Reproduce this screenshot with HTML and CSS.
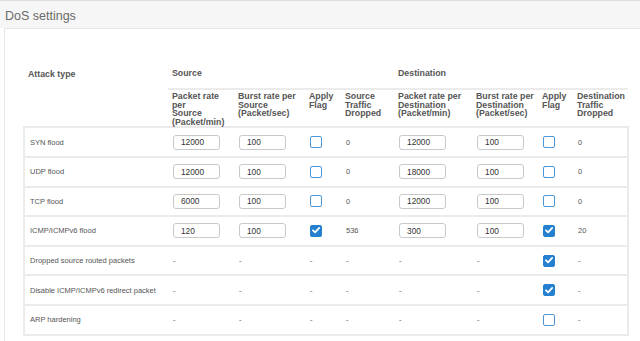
FILE: index.html
```html
<!DOCTYPE html>
<html lang="en">
  <head>
    <meta charset="UTF-8" />
    <title>DoS settings</title>
    <link rel="stylesheet" href="styles.css">
  </head>
  <body>
    <div class="section-title">DoS settings</div>

    <div class="panel">
      <table class="dos-table">
        <colgroup>
          <col style="width: 144px">
          <col style="width: 66px">
          <col style="width: 71px">
          <col style="width: 36px">
          <col style="width: 53px">
          <col style="width: 78px">
          <col style="width: 66px">
          <col style="width: 35px">
          <col style="width: 55px">
        </colgroup>
        <thead>
          <tr class="group-row">
            <th class="attack-head">Attack type</th>
            <th colspan="4" class="group-head">Source</th>
            <th colspan="4" class="group-head">Destination</th>
          </tr>
          <tr class="sub-row">
            <th></th>
            <th>Packet rate<br>per<br>Source<br>(Packet/min)</th>
            <th>Burst rate per<br>Source<br>(Packet/sec)</th>
            <th>Apply<br>Flag</th>
            <th>Source<br>Traffic<br>Dropped</th>
            <th>Packet rate per<br>Destination<br>(Packet/min)</th>
            <th>Burst rate per<br>Destination<br>(Packet/sec)</th>
            <th>Apply<br>Flag</th>
            <th>Destination<br>Traffic<br>Dropped</th>
          </tr>
        </thead>
        <tbody>
          <tr>
            <td>SYN flood</td>
            <td><input class="rate-input" type="text" value="12000"></td>
            <td><input class="rate-input" type="text" value="100"></td>
            <td><span class="checkbox"></span></td>
            <td>0</td>
            <td><input class="rate-input" type="text" value="12000"></td>
            <td><input class="rate-input" type="text" value="100"></td>
            <td><span class="checkbox"></span></td>
            <td>0</td>
          </tr>
          <tr>
            <td>UDP flood</td>
            <td><input class="rate-input" type="text" value="12000"></td>
            <td><input class="rate-input" type="text" value="100"></td>
            <td><span class="checkbox"></span></td>
            <td>0</td>
            <td><input class="rate-input" type="text" value="18000"></td>
            <td><input class="rate-input" type="text" value="100"></td>
            <td><span class="checkbox"></span></td>
            <td>0</td>
          </tr>
          <tr>
            <td>TCP flood</td>
            <td><input class="rate-input" type="text" value="6000"></td>
            <td><input class="rate-input" type="text" value="100"></td>
            <td><span class="checkbox"></span></td>
            <td>0</td>
            <td><input class="rate-input" type="text" value="12000"></td>
            <td><input class="rate-input" type="text" value="100"></td>
            <td><span class="checkbox"></span></td>
            <td>0</td>
          </tr>
          <tr>
            <td>ICMP/ICMPv6 flood</td>
            <td><input class="rate-input" type="text" value="120"></td>
            <td><input class="rate-input" type="text" value="100"></td>
            <td><span class="checkbox checked"><svg viewBox="0 0 12 12"><path d="M3 6.3 L5.1 8.3 L9.2 3.9"/></svg></span></td>
            <td>536</td>
            <td><input class="rate-input" type="text" value="300"></td>
            <td><input class="rate-input" type="text" value="100"></td>
            <td><span class="checkbox checked"><svg viewBox="0 0 12 12"><path d="M3 6.3 L5.1 8.3 L9.2 3.9"/></svg></span></td>
            <td>20</td>
          </tr>
          <tr>
            <td>Dropped source routed packets</td>
            <td>-</td>
            <td>-</td>
            <td>-</td>
            <td>-</td>
            <td>-</td>
            <td>-</td>
            <td><span class="checkbox checked"><svg viewBox="0 0 12 12"><path d="M3 6.3 L5.1 8.3 L9.2 3.9"/></svg></span></td>
            <td>-</td>
          </tr>
          <tr>
            <td>Disable ICMP/ICMPv6 redirect packet</td>
            <td>-</td>
            <td>-</td>
            <td>-</td>
            <td>-</td>
            <td>-</td>
            <td>-</td>
            <td><span class="checkbox checked"><svg viewBox="0 0 12 12"><path d="M3 6.3 L5.1 8.3 L9.2 3.9"/></svg></span></td>
            <td>-</td>
          </tr>
          <tr>
            <td>ARP hardening</td>
            <td>-</td>
            <td>-</td>
            <td>-</td>
            <td>-</td>
            <td>-</td>
            <td>-</td>
            <td><span class="checkbox"></span></td>
            <td>-</td>
          </tr>
        </tbody>
      </table>
    </div>
  </body>
</html>
```

FILE: styles.css
```css
:root {
  --border: #e6e6e6;
  --row-line: #ebebeb;
  --title-bg: #f6f6f6;
  --text: #555555;
  --title-text: #6a6a6a;
  --blue: #2580cf;
  --blue-border: #4b97d8;
  --input-border: #c9c9c9;
}

* {
  box-sizing: border-box;
}

body {
  margin: 0;
  font-family: "Liberation Sans", Arial, sans-serif;
  color: var(--text);
  background: #ffffff;
  overflow: hidden;
}

.section-title {
  height: 28px;
  border-top: 1px solid #dddddd;
  background: var(--title-bg);
  padding: 8px 5px 0;
  font-size: 12.5px;
  color: var(--title-text);
}

.panel {
  margin-left: 4px;
  min-height: 330px;
  border: 1px solid var(--border);
  border-right: none;
  padding: 34px 0 0 18px;
}

.dos-table {
  table-layout: fixed;
  width: 604px;
  border-collapse: collapse;
}

/* Header */
.dos-table th {
  text-align: left;
  font-weight: bold;
  font-size: 8.8px;
  color: var(--text);
  padding: 0 2px 0 4px;
}

.group-row th {
  padding-top: 5px;
  padding-bottom: 10px;
  line-height: 10px;
}

.group-head {
  border-bottom: 2px solid var(--row-line);
}

.sub-row th {
  vertical-align: top;
  line-height: 8.6px;
  padding-top: 2px;
  padding-bottom: 0;
}

/* Body */
.dos-table tbody {
  border: 2px solid var(--row-line);
}

.dos-table tbody tr {
  border-bottom: 2px solid var(--row-line);
}

.dos-table td {
  height: 29.6px;
  padding: 0 2px 0 5px;
  font-size: 7.5px;
  color: var(--text);
  vertical-align: middle;
  white-space: nowrap;
}

.rate-input {
  display: block;
  width: 47px;
  height: 15px;
  padding: 0 0 0 7px;
  border: 1px solid var(--input-border);
  border-radius: 3px;
  font-family: "Liberation Sans", Arial, sans-serif;
  font-size: 8.3px;
  color: #333333;
  background: #ffffff;
}

.checkbox {
  display: block;
  width: 12px;
  height: 12px;
  border: 1.5px solid var(--blue-border);
  border-radius: 2px;
  background: #ffffff;
}

.checkbox.checked {
  background: var(--blue);
  border-color: var(--blue);
}

.checkbox svg {
  display: block;
  width: 12px;
  height: 12px;
  margin: -1.5px;
  fill: none;
  stroke: #ffffff;
  stroke-width: 1.8;
  stroke-linecap: round;
  stroke-linejoin: round;
}
```
